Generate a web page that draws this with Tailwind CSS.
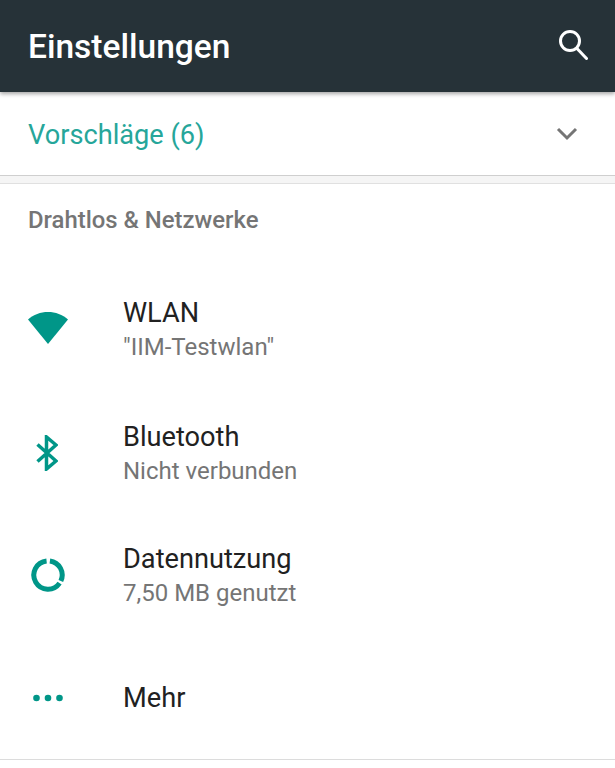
<!DOCTYPE html>
<html lang="de">
<head>
    <meta charset="UTF-8">
    <title>Einstellungen</title>
    <script src="https://cdn.jsdelivr.net/npm/@tailwindcss/browser@4"></script>
</head>
<body class="bg-white font-['Roboto',sans-serif] overflow-hidden">
    <div class="w-[615px] h-[768px] flex flex-col">
        <!-- App bar -->
        <header class="h-[92px] shrink-0 bg-[#263238] flex items-center justify-between pl-[28px] pr-[27px] pb-[3px] shadow-[0_2px_4px_rgba(0,0,0,0.35)] relative z-10">
            <h1 class="text-[33.5px] font-medium text-white translate-y-[3px]">Einstellungen</h1>
            <svg class="w-[30px] h-[31px]" viewBox="0 0 30 31" fill="none" stroke="#fff" stroke-width="3"><circle cx="12" cy="12" r="9.5"/><path d="M19 19.500l9.500 10" stroke-linecap="round"/></svg>
        </header>

        <!-- Suggestions -->
        <div class="h-[84px] shrink-0 flex items-center justify-between pl-[28px] pr-[37px] border-b border-[#cfcfcf]">
            <span class="text-[27.2px] pt-[4px] text-[#26a69a]">Vorschläge (6)</span>
            <svg class="w-[22px] h-[14px]" viewBox="0 0 22 14" fill="none" stroke="#757575" stroke-width="3"><path d="M2 2l9 9 9-9"/></svg>
        </div>
        <div class="h-[8px] shrink-0 bg-[#f5f5f5] border-b border-[#e0e0e0]"></div>

        <!-- Section header -->
        <div class="h-[84px] shrink-0 pl-[28px] pt-[22px]">
            <h2 class="text-[23.9px] leading-[28px] font-medium text-[#757575]">Drahtlos &amp; Netzwerke</h2>
        </div>

        <!-- Rows -->
        <div class="h-[123px] shrink-0 flex items-center">
            <div class="w-[123px] pl-[28px] shrink-0">
                <svg class="w-[40px] h-[32px] block -translate-y-[2px]" viewBox="0 0 40 32" fill="#009688"><path d="M0 7.500C5.500 2.500 12.500 0 20 0s14.500 2.500 20 7.500L20 32z"/></svg>
            </div>
            <div class="pt-[1px]">
                <div class="text-[27.2px] leading-[34px] text-[#212121]">WLAN</div>
                <div class="text-[24px] leading-[35px] text-[#757575]">"IIM-Testwlan"</div>
            </div>
        </div>
        <div class="h-[123px] shrink-0 flex items-center">
            <div class="w-[123px] pl-[36px] shrink-0">
                <svg class="w-[22px] h-[36px] block" viewBox="0 0 22 36" fill="none" stroke="#009688" stroke-width="3.500"><path d="M1.500 9.500L20 26 10.500 34V2l9.500 8L1.500 26.500"/></svg>
            </div>
            <div class="pt-[3px]">
                <div class="text-[27.2px] leading-[34px] text-[#212121]">Bluetooth</div>
                <div class="text-[24px] leading-[35px] text-[#757575]">Nicht verbunden</div>
            </div>
        </div>
        <div class="h-[122px] shrink-0 flex items-center">
            <div class="w-[123px] pl-[31px] shrink-0">
                <svg class="w-[34px] h-[34px] block" viewBox="0 0 36 36" fill="none" stroke="#009688" stroke-width="5.300"><path d="M20 3.100A15 15 0 0 1 31.600 24.300"/><path d="M30.300 26.600A15 15 0 1 1 16.500 3.100"/></svg>
            </div>
            <div class="pt-[3px]">
                <div class="text-[27.2px] leading-[34px] text-[#212121]">Datennutzung</div>
                <div class="text-[24px] leading-[35px] text-[#757575]">7,50 MB genutzt</div>
            </div>
        </div>
        <div class="h-[124px] shrink-0 flex items-center border-b border-[#dcdcdc]">
            <div class="w-[123px] pl-[33px] shrink-0">
                <svg class="w-[30px] h-[8px] block" viewBox="0 0 30 8" fill="#009688"><circle cx="3.500" cy="4" r="3.300"/><circle cx="15" cy="4" r="3.300"/><circle cx="26.500" cy="4" r="3.300"/></svg>
            </div>
            <div class="text-[27.2px] leading-[34px] text-[#212121]">Mehr</div>
        </div>
    </div>
</body>
</html>
